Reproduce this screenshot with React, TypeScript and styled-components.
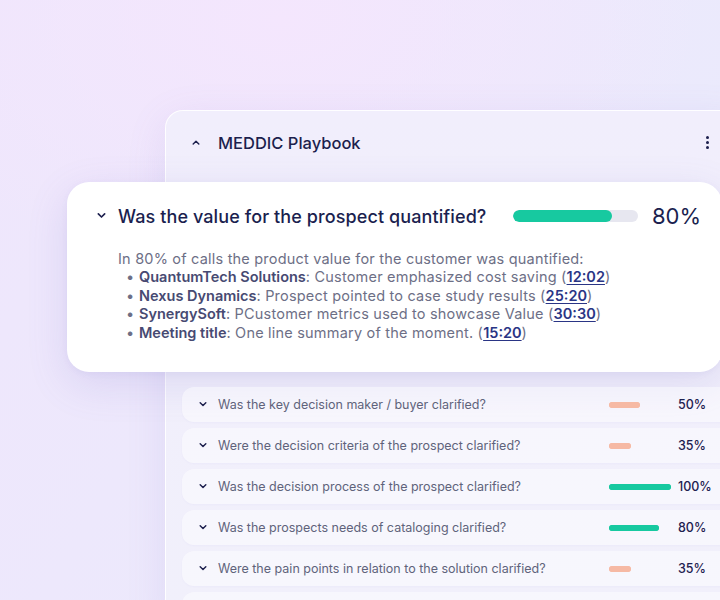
import React from "react";
import styled, { createGlobalStyle } from "styled-components";

const Global = createGlobalStyle`
  html, body { margin: 0; padding: 0; }
  body { font-family: Inter, "Noto Sans", sans-serif; }
  * { box-sizing: border-box; }
`;

const Page = styled.div`
  width: 720px;
  height: 600px;
  overflow: hidden;
  padding: 110px 0 0 165px;
  background:
    radial-gradient(ellipse 420px 260px at 280px 20px, #f4e6fd 0%, rgba(244,230,253,0) 100%),
    linear-gradient(120deg, #efe6fc 0%, #ece9fc 55%, #e9ebfc 100%);
`;

const Panel = styled.div`
  width: 580px;
  min-height: 520px;
  border-radius: 18px;
  border: 1.5px solid rgba(255, 255, 255, 0.9);
  background: linear-gradient(180deg, #f1eefc 0%, #f1f0fb 100%);
  box-shadow: 0 10px 40px rgba(120, 110, 200, 0.12);
`;

const PanelHeader = styled.div`
  height: 63px;
  display: flex;
  align-items: center;
  padding: 0 0 0 26px;
  width: 555px;
`;

const HeaderTitle = styled.div`
  margin-left: 18px;
  font-size: 16.5px;
  font-weight: 500;
  color: #1c1f4d;
  flex: 1;
`;

const Kebab = styled.div`
  display: flex;
  flex-direction: column;
  gap: 1.5px;
  margin-right: 12px;
  span {
    width: 3.5px;
    height: 3.5px;
    border-radius: 50%;
    background: #1c1f4d;
  }
`;

const FeatureCard = styled.div`
  margin: 8px 0 0 -99px;
  width: 655px;
  height: 190px;
  background: #ffffff;
  border-radius: 22px;
  box-shadow: 0 12px 40px rgba(110, 100, 190, 0.16), 0 2px 6px rgba(110, 100, 190, 0.06);
  padding: 22px 20px 0 30px;
`;

const CardTitleRow = styled.div`
  display: flex;
  align-items: center;
  height: 24px;
`;

const CardTitle = styled.div`
  margin-left: 12px;
  font-size: 18px;
  font-weight: 500;
  color: #1b1f4f;
  letter-spacing: 0.1px;
  width: 395px;
`;

const Track = styled.div<{ $w: number; $h: number; $bg: string }>`
  width: ${(p) => p.$w}px;
  height: ${(p) => p.$h}px;
  border-radius: ${(p) => p.$h / 2}px;
  background: ${(p) => p.$bg};
  overflow: hidden;
  flex-shrink: 0;
`;

const Fill = styled.div<{ $color: string }>`
  height: 100%;
  border-radius: inherit;
  background: ${(p) => p.$color};
`;

const BigPct = styled.div`
  margin-left: 14px;
  font-size: 22px;
  font-weight: 400;
  color: #1b1f4f;
`;

const CardBody = styled.div`
  margin: 22px 0 0 21px;
  font-size: 14.5px;
  line-height: 18.4px;
  color: #6d6f86;
  letter-spacing: 0.2px;
`;

const Bullets = styled.ul`
  margin: 0;
  padding: 0 0 0 8px;
  list-style: none;
`;

const Bullet = styled.li`
  display: flex;
  &::before {
    content: "•";
    width: 13px;
    flex-shrink: 0;
    color: #6d6f86;
  }
  b {
    font-weight: 600;
    color: #474a72;
    letter-spacing: 0;
  }
  a {
    color: #2a3585;
    font-weight: 600;
    letter-spacing: 0;
    text-decoration: underline;
    text-underline-offset: 2px;
  }
`;

const RowList = styled.div`
  display: flex;
  flex-direction: column;
  gap: 6px;
  padding: 15px 0 0 16px;
`;

const Row = styled.div`
  height: 35px;
  display: flex;
  align-items: center;
  padding-left: 17px;
  border-radius: 12px;
  background: rgba(255, 255, 255, 0.45);
  box-shadow: 0 1px 2px rgba(140, 130, 210, 0.05);
`;

const RowText = styled.div`
  margin-left: 11px;
  width: 391px;
  font-size: 12.5px;
  color: #60637b;
  letter-spacing: 0;
`;

const SmallBarBox = styled.div`
  width: 69px;
  display: flex;
`;

const RowPct = styled.div`
  font-size: 12.5px;
  font-weight: 500;
  color: #1e2150;
`;

const Chevron = ({ up, size = 8, color = "#1c1f4d", sw = 2 }: { up?: boolean; size?: number; color?: string; sw?: number }) => (
  <svg width={size} height={size * 0.6} viewBox="0 0 10 6" style={{ flexShrink: 0 }}>
    <polyline
      points={up ? "1.5,5 5,1.5 8.5,5" : "1.5,1 5,4.5 8.5,1"}
      fill="none"
      stroke={color}
      strokeWidth={sw}
      strokeLinecap="round"
      strokeLinejoin="round"
    />
  </svg>
);

const rows = [
  { q: "Was the key decision maker / buyer clarified?", v: 50 },
  { q: "Were the decision criteria of the prospect clarified?", v: 35 },
  { q: "Was the decision process of the prospect clarified?", v: 100 },
  { q: "Was the prospects needs of cataloging clarified?", v: 80 },
  { q: "Were the pain points in relation to the solution clarified?", v: 35 },
];

const details = [
  { b: "QuantumTech Solutions", t: ": Customer emphasized cost saving (", l: "12:02" },
  { b: "Nexus Dynamics", t: ": Prospect pointed to case study results (", l: "25:20" },
  { b: "SynergySoft", t: ": PCustomer metrics used to showcase Value (", l: "30:30" },
  { b: "Meeting title", t: ": One line summary of the moment. (", l: "15:20" },
];

export default function App() {
  return (
    <>
      <Global />
      <Page>
        <Panel>
          <PanelHeader>
            <Chevron up size={8} sw={1.8} />
            <HeaderTitle>MEDDIC Playbook</HeaderTitle>
            <Kebab>
              <span />
              <span />
              <span />
            </Kebab>
          </PanelHeader>
          <FeatureCard>
            <CardTitleRow>
              <Chevron size={9} sw={1.8} />
              <CardTitle>Was the value for the prospect quantified?</CardTitle>
              <Track $w={125} $h={12} $bg="#e7e7f0">
                <Fill $color="#17c9a0" style={{ width: "79%" }} />
              </Track>
              <BigPct>80%</BigPct>
            </CardTitleRow>
            <CardBody>
              In 80% of calls the product value for the customer was quantified:
              <Bullets>
                {details.map((d) => (
                  <Bullet key={d.b}>
                    <span>
                      <b>{d.b}</b>
                      {d.t}
                      <a>{d.l}</a>)
                    </span>
                  </Bullet>
                ))}
              </Bullets>
            </CardBody>
          </FeatureCard>
          <RowList>
            {rows.map((r) => (
              <Row key={r.q}>
                <Chevron size={8} sw={1.8} />
                <RowText>{r.q}</RowText>
                <SmallBarBox>
                  <Track $w={Math.round((62 * r.v) / 100)} $h={6} $bg={r.v >= 80 ? "#17c9a0" : "#f6b9a4"}>
                    <Fill $color={r.v >= 80 ? "#17c9a0" : "#f6b9a4"} style={{ width: "100%" }} />
                  </Track>
                </SmallBarBox>
                <RowPct>{r.v}%</RowPct>
              </Row>
            ))}
            <Row />
          </RowList>
        </Panel>
      </Page>
    </>
  );
}
